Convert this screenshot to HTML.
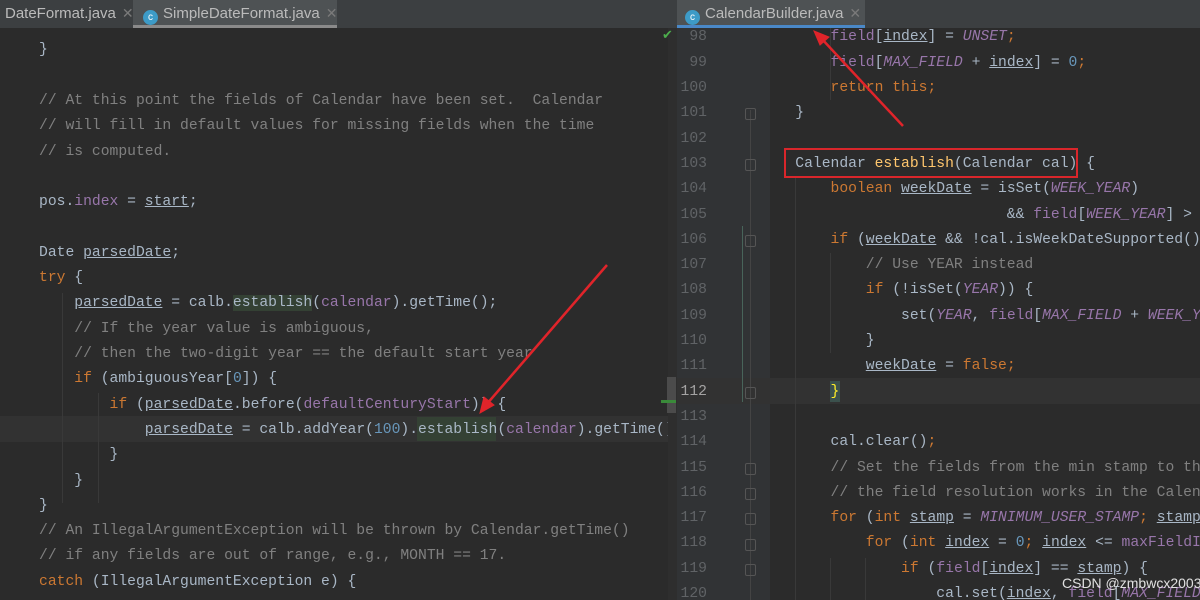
<!DOCTYPE html>
<html><head><meta charset="utf-8"><style>
*{margin:0;padding:0;box-sizing:border-box}
body{width:1200px;height:600px;overflow:hidden;background:#2b2b2b;position:relative;font-family:"Liberation Mono",monospace;font-size:14.7px;color:#a9b7c6}
.pane{position:absolute;top:0;height:600px;overflow:hidden;background:#2b2b2b}
.l{position:absolute;height:25.3px;line-height:25.3px;white-space:pre;margin-top:3px}
.k{color:#cc7832}.c{color:#808080}.f{color:#9876aa}.fi{color:#9876aa;font-style:italic}.n{color:#6897bb}.m{color:#ffc66d}.u{text-decoration:underline;text-decoration-color:#a9b7c6}
.tabs{position:absolute;top:0;height:28px;background:#3c3f41;font-family:"Liberation Sans",sans-serif;font-size:15px;color:#bbbbbb}
.tab{position:absolute;top:0;height:28px;line-height:26px;white-space:pre}
.x{color:#7a7a7a;font-size:14px;margin-left:6px}
.ic{display:inline-block;width:15px;height:15px;border-radius:50%;background:#3d9bc7;vertical-align:-2px;margin-right:5px;color:#fff;font-size:10px;line-height:15px;text-align:center}
.ln{position:absolute;width:30px;text-align:right;color:#606366;height:25.3px;line-height:25.3px;margin-top:3px}
.fold{position:absolute;width:11px;height:12px;border:1px solid #555;border-radius:2px;margin-top:3px}
</style></head><body>
<div class="pane" style="left:0;width:677px">
 <div style="position:absolute;left:0;top:416px;width:668px;height:26px;background:#323232"></div>
 <div style="position:absolute;left:417px;top:417px;width:79px;height:24px;background:#344134"></div>
 <div style="position:absolute;left:98px;top:393px;width:1px;height:110px;background:#393939"></div>
 <div style="position:absolute;left:62px;top:293px;width:1px;height:210px;background:#393939"></div>
 <div class="l" style="left:39px;top:35.4px">}</div>
 <div class="l c" style="left:39px;top:86px">// At this point the fields of Calendar have been set.  Calendar</div>
 <div class="l c" style="left:39px;top:111.3px">// will fill in default values for missing fields when the time</div>
 <div class="l c" style="left:39px;top:136.6px">// is computed.</div>
 <div class="l" style="left:39px;top:187.2px">pos.<span class="f">index</span> = <span class="u">start</span>;</div>
 <div class="l" style="left:39px;top:237.8px">Date <span class="u">parsedDate</span>;</div>
 <div class="l" style="left:39px;top:263.1px"><span class="k">try</span> {</div>
 <div class="l" style="left:39px;top:288.4px">    <span class="u">parsedDate</span> = calb.<span style="background:#344134">establish</span>(<span class="f">calendar</span>).getTime();</div>
 <div class="l c" style="left:39px;top:313.7px">    // If the year value is ambiguous,</div>
 <div class="l c" style="left:39px;top:339px">    // then the two-digit year == the default start year</div>
 <div class="l" style="left:39px;top:364.3px">    <span class="k">if</span> (ambiguousYear[<span class="n">0</span>]) {</div>
 <div class="l" style="left:39px;top:389.6px">        <span class="k">if</span> (<span class="u">parsedDate</span>.before(<span class="f">defaultCenturyStart</span>)) {</div>
 <div class="l" style="left:39px;top:414.9px">            <span class="u">parsedDate</span> = calb.addYear(<span class="n">100</span>).establish(<span class="f">calendar</span>).getTime();</div>
 <div class="l" style="left:39px;top:440.2px">        }</div>
 <div class="l" style="left:39px;top:465.5px">    }</div>
 <div class="l" style="left:39px;top:490.8px">}</div>
 <div class="l c" style="left:39px;top:516.1px">// An IllegalArgumentException will be thrown by Calendar.getTime()</div>
 <div class="l c" style="left:39px;top:541.4px">// if any fields are out of range, e.g., MONTH == 17.</div>
 <div class="l" style="left:39px;top:566.7px"><span class="k">catch</span> (IllegalArgumentException e) {</div>
 <div style="position:absolute;left:668px;top:28px;width:9px;height:572px;background:#2e2e2e"></div>
 <div style="position:absolute;left:667px;top:377px;width:9px;height:36px;background:#4b4b4b"></div>
 <div style="position:absolute;left:661px;top:400px;width:15px;height:3px;background:#3a8a3a"></div>
 <div style="position:absolute;left:662px;top:28px;color:#4cae4c;font-size:13px">✔</div>
</div>
<div class="tabs" style="left:0;width:677px">
 <div class="tab" style="left:5px">DateFormat.java<span class="x">✕</span></div>
 <div class="tab" style="left:133px;width:204px;background:#4e5254;border-bottom:3px solid #8a8a8a;padding-left:10px"><span class="ic">c</span>SimpleDateFormat.java<span class="x">✕</span></div>
</div>

<div class="pane" style="left:677px;width:523px">
 <div style="position:absolute;left:0;top:0;width:93px;height:600px;background:#313335"></div>
 <div style="position:absolute;left:0;top:378px;width:523px;height:26px;background:#323232"></div>
 <div style="position:absolute;left:153px;top:381px;width:10px;height:21px;background:#3b514d"></div>
 <div style="position:absolute;left:65px;top:226px;width:1px;height:176px;background:#48645a"></div>
 <div style="position:absolute;left:73px;top:110px;width:1px;height:490px;background:#444"></div>
 <div style="position:absolute;left:118px;top:178px;width:1px;height:422px;background:#393939"></div>
 <div style="position:absolute;left:153px;top:0;width:1px;height:100px;background:#393939"></div>
 <div style="position:absolute;left:153px;top:253px;width:1px;height:100px;background:#393939"></div>
 <div style="position:absolute;left:153px;top:558px;width:1px;height:42px;background:#393939"></div>
 <div style="position:absolute;left:188px;top:558px;width:1px;height:42px;background:#393939"></div>
</div>
<div class="tabs" style="left:677px;width:523px">
 <div class="tab" style="left:0;width:188px;background:#4e5254;border-bottom:3px solid #4a88c7;padding-left:8px"><span class="ic">c</span>CalendarBuilder.java<span class="x">✕</span></div>
</div>
<div style="position:absolute;left:677px;top:28px;width:523px;height:572px;overflow:hidden">
 <div class="ln" style="left:0;top:-5.6px">98</div>
 <div class="ln" style="left:0;top:19.7px">99</div>
 <div class="ln" style="left:0;top:45px">100</div>
 <div class="ln" style="left:0;top:70.3px">101</div>
 <div class="ln" style="left:0;top:95.6px">102</div>
 <div class="ln" style="left:0;top:120.9px">103</div>
 <div class="ln" style="left:0;top:146.2px">104</div>
 <div class="ln" style="left:0;top:171.5px">105</div>
 <div class="ln" style="left:0;top:196.8px">106</div>
 <div class="ln" style="left:0;top:222.1px">107</div>
 <div class="ln" style="left:0;top:247.4px">108</div>
 <div class="ln" style="left:0;top:272.7px">109</div>
 <div class="ln" style="left:0;top:298px">110</div>
 <div class="ln" style="left:0;top:323.3px">111</div>
 <div class="ln" style="left:0;top:348.6px;color:#a4a3a3">112</div>
 <div class="ln" style="left:0;top:373.9px">113</div>
 <div class="ln" style="left:0;top:399.2px">114</div>
 <div class="ln" style="left:0;top:424.5px">115</div>
 <div class="ln" style="left:0;top:449.8px">116</div>
 <div class="ln" style="left:0;top:475.1px">117</div>
 <div class="ln" style="left:0;top:500.4px">118</div>
 <div class="ln" style="left:0;top:525.7px">119</div>
 <div class="ln" style="left:0;top:551px">120</div>
 <div class="fold" style="left:68px;top:77px"></div>
 <div class="fold" style="left:68px;top:128px"></div>
 <div class="fold" style="left:68px;top:204px"></div>
 <div class="fold" style="left:68px;top:356px"></div>
 <div class="fold" style="left:68px;top:432px"></div>
 <div class="fold" style="left:68px;top:457px"></div>
 <div class="fold" style="left:68px;top:482px"></div>
 <div class="fold" style="left:68px;top:508px"></div>
 <div class="fold" style="left:68px;top:533px"></div>
</div>
<div style="position:absolute;left:760px;top:28px;width:440px;height:572px;overflow:hidden">
 <div class="l" style="left:0;top:-5.6px">        <span class="f">field</span>[<span class="u">index</span>] = <span class="fi">UNSET</span><span class="k">;</span></div>
 <div class="l" style="left:0;top:19.7px">        <span class="f">field</span>[<span class="fi">MAX_FIELD</span> + <span class="u">index</span>] = <span class="n">0</span><span class="k">;</span></div>
 <div class="l" style="left:0;top:45px">        <span class="k">return this;</span></div>
 <div class="l" style="left:0;top:70.3px">    }</div>
 <div class="l" style="left:0;top:120.9px">    Calendar <span class="m">establish</span>(Calendar cal) {</div>
 <div class="l" style="left:0;top:146.2px">        <span class="k">boolean</span> <span class="u">weekDate</span> = isSet(<span class="fi">WEEK_YEAR</span>)</div>
 <div class="l" style="left:0;top:171.5px">                            &amp;&amp; <span class="f">field</span>[<span class="fi">WEEK_YEAR</span>] &gt; <span class="f">field</span></div>
 <div class="l" style="left:0;top:196.8px">        <span class="k">if</span> (<span class="u">weekDate</span> &amp;&amp; !cal.isWeekDateSupported()) {</div>
 <div class="l c" style="left:0;top:222.1px">            // Use YEAR instead</div>
 <div class="l" style="left:0;top:247.4px">            <span class="k">if</span> (!isSet(<span class="fi">YEAR</span>)) {</div>
 <div class="l" style="left:0;top:272.7px">                set(<span class="fi">YEAR</span>, <span class="f">field</span>[<span class="fi">MAX_FIELD</span> + <span class="fi">WEEK_YEAR</span>]);</div>
 <div class="l" style="left:0;top:298px">            }</div>
 <div class="l" style="left:0;top:323.3px">            <span class="u">weekDate</span> = <span class="k">false;</span></div>
 <div class="l" style="left:0;top:348.6px">        <span style="color:#ffef28">}</span></div>
 <div class="l" style="left:0;top:399.2px">        cal.clear()<span class="k">;</span></div>
 <div class="l c" style="left:0;top:424.5px">        // Set the fields from the min stamp to the max</div>
 <div class="l c" style="left:0;top:449.8px">        // the field resolution works in the Calendar.</div>
 <div class="l" style="left:0;top:475.1px">        <span class="k">for</span> (<span class="k">int</span> <span class="u">stamp</span> = <span class="fi">MINIMUM_USER_STAMP</span><span class="k">;</span> <span class="u">stamp</span> &lt;</div>
 <div class="l" style="left:0;top:500.4px">            <span class="k">for</span> (<span class="k">int</span> <span class="u">index</span> = <span class="n">0</span><span class="k">;</span> <span class="u">index</span> &lt;= <span class="f">maxFieldIndex</span></div>
 <div class="l" style="left:0;top:525.7px">                <span class="k">if</span> (<span class="f">field</span>[<span class="u">index</span>] == <span class="u">stamp</span>) {</div>
 <div class="l" style="left:0;top:551px">                    cal.set(<span class="u">index</span>, <span class="f">field</span>[<span class="fi">MAX_FIELD</span> + <span class="u">index</span>]);</div>
</div>
<div style="position:absolute;left:784px;top:148px;width:294px;height:30px;border:2px solid #d9262b"></div>
<div style="position:absolute;left:1062px;top:575px;white-space:nowrap;font-family:'Liberation Sans',sans-serif;font-size:14px;color:#e0e0e0">CSDN @zmbwcx2003</div>
<svg style="position:absolute;left:0;top:0" width="1200" height="600">
 <g stroke="#e0242a" stroke-width="2.5" fill="#e0242a">
  <line x1="607" y1="265" x2="486" y2="405"/>
  <polygon points="480,413 484,397 494,405" stroke-width="1"/>
  <line x1="903" y1="126" x2="821" y2="38"/>
  <polygon points="814,31 829,37 820,45" stroke-width="1"/>
 </g>
</svg>
</body></html>
